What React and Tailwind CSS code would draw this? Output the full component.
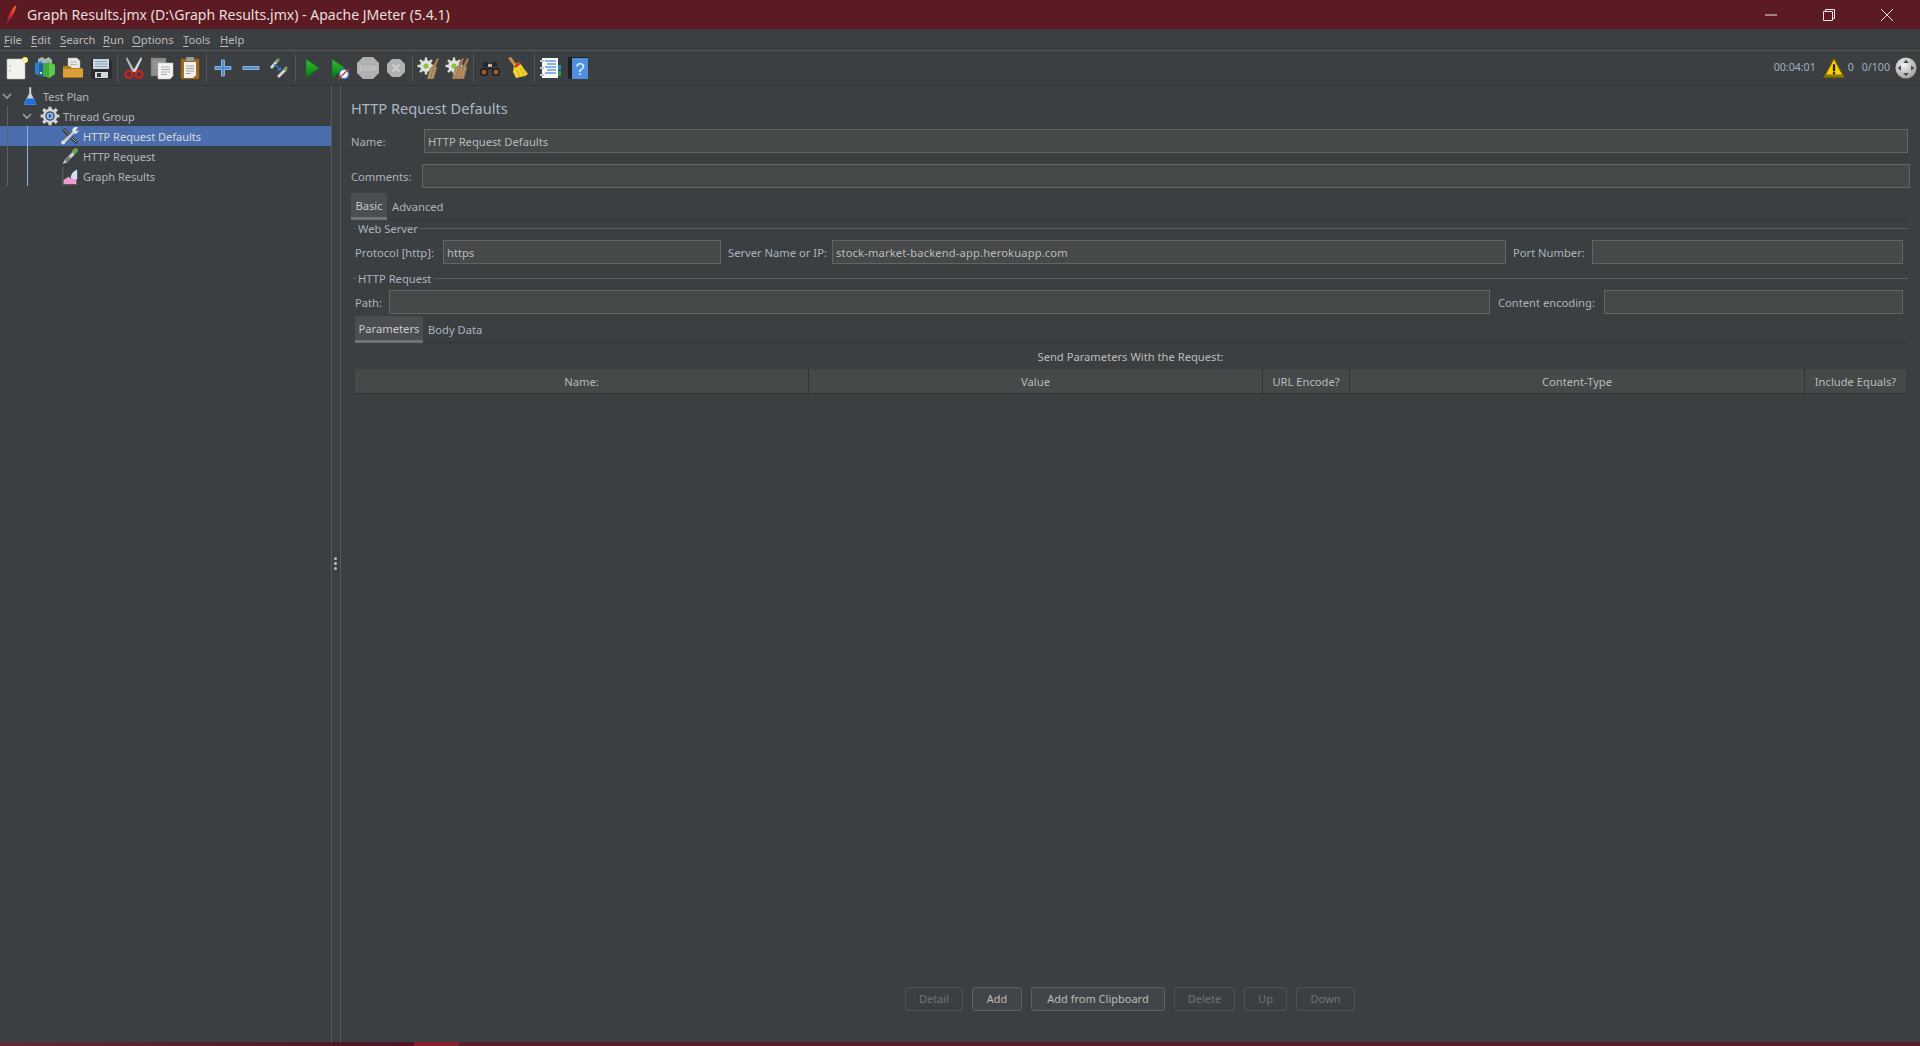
import React from 'react';

const FONT = "font-['Noto_Sans','Open_Sans',sans-serif]";

function Svg({ size = 24, children }) {
  return (
    <svg width={size} height={size} viewBox="0 0 24 24" className="shrink-0">
      {children}
    </svg>
  );
}

function NewIcon() {
  return (
    <Svg>
      <rect x="2" y="3" width="18" height="20" rx="1" fill="#f1f1ee" stroke="#bdbdbd" strokeWidth="0.6" />
      <circle cx="5" cy="10" r="0.7" fill="#999" />
      <circle cx="5" cy="15" r="0.7" fill="#999" />
      <circle cx="20" cy="4" r="3" fill="#f7e98a" />
      <circle cx="20" cy="4" r="1.5" fill="#fff6c0" />
    </Svg>
  );
}

function TemplatesIcon() {
  return (
    <Svg>
      <path d="M5 3l4-2 3 2 4-2 3 3v8H5z" fill="#a9b5b8" />
      <path d="M2 7l7-2v15l-7-2z" fill="#2f7fc9" />
      <path d="M6 8l5-1v14l-5-1z" fill="#1e5fa8" />
      <path d="M10 8l6-2 6 3v9l-6 4-6-2z" fill="#3fae38" />
      <path d="M16 6l6 3v9l-6 4z" fill="#5fc94a" />
      <rect x="7" y="16" width="2" height="2" fill="#f5e15a" />
    </Svg>
  );
}

function OpenIcon() {
  return (
    <Svg>
      <path d="M7 2h9l3 3v9H7z" fill="#e9e9e6" stroke="#a8a8a8" strokeWidth="0.5" />
      <path d="M9 6h7M9 8.5h7" stroke="#aaa" strokeWidth="0.8" />
      <path d="M2 10h7l2 2h11v9a1 1 0 01-1 1H3a1 1 0 01-1-1z" fill="#b97f1f" />
      <path d="M2 13h20v8a1 1 0 01-1 1H3a1 1 0 01-1-1z" fill="#d9a03a" />
      <path d="M2 21h20v1H2z" fill="#a86f17" />
    </Svg>
  );
}

function SaveIcon() {
  return (
    <Svg>
      <path d="M2 3h19l2 2v18H2z" fill="#2b2d30" />
      <rect x="4" y="3" width="16" height="10" fill="#c9d5e2" />
      <path d="M6 5.5h12M6 8h12M6 10.5h12" stroke="#8ba0b8" strokeWidth="0.9" />
      <rect x="6" y="16" width="13" height="6" fill="#d7d7d7" />
      <rect x="8" y="17" width="4" height="4" fill="#3a3a3a" />
    </Svg>
  );
}

function CutIcon() {
  return (
    <Svg>
      <path d="M5 1l8 14-2.5 1.5L4 3z" fill="#b5b8ba" />
      <path d="M19 1l-8 14 2.5 1.5L20 3z" fill="#d6d8d9" />
      <circle cx="7" cy="18.5" r="3.5" fill="none" stroke="#d41f1f" strokeWidth="2.2" />
      <circle cx="17" cy="18.5" r="3.5" fill="none" stroke="#d41f1f" strokeWidth="2.2" />
    </Svg>
  );
}

function CopyIcon() {
  return (
    <Svg>
      <rect x="1" y="2" width="15" height="18" fill="#8d8d8d" stroke="#707070" strokeWidth="0.5" />
      <path d="M3 6h11M3 9h11M3 12h11" stroke="#a8a8a8" strokeWidth="0.8" />
      <path d="M8 7h15v13l-3 3H8z" fill="#f3f3f1" stroke="#c4c4c4" strokeWidth="0.5" />
      <path d="M11 11h9M11 13.5h9M11 16h9M11 18.5h6" stroke="#9a9a9a" strokeWidth="0.8" />
    </Svg>
  );
}

function PasteIcon() {
  return (
    <Svg>
      <rect x="3" y="3" width="18" height="20" rx="1" fill="#a3681f" stroke="#8a5516" strokeWidth="0.6" />
      <rect x="8" y="1" width="8" height="4" rx="1" fill="#9b9b9b" />
      <path d="M6 6h12v13l-3 3H6z" fill="#efefec" />
      <path d="M8 10h8M8 12.5h8M8 15h8M8 17.5h5" stroke="#8f8f8f" strokeWidth="0.8" />
    </Svg>
  );
}

function PlusIcon() {
  return (
    <Svg>
      <path d="M10.5 4h3v6.5H20v3h-6.5V20h-3v-6.5H4v-3h6.5z" fill="#4f8fd0" stroke="#9cc4ec" strokeWidth="0.8" />
    </Svg>
  );
}

function MinusIcon() {
  return (
    <Svg>
      <rect x="4" y="10.5" width="16" height="3" fill="#4f8fd0" stroke="#9cc4ec" strokeWidth="0.8" />
    </Svg>
  );
}

function ToggleIcon() {
  return (
    <Svg>
      <path d="M3 11l7-8 2 2-7 8z" fill="#d4d6d4" />
      <path d="M8 5l3-3 2 2-3 3z" fill="#6f9a5e" />
      <path d="M10 20l8-8 2 2-8 8z" fill="#d4d6d4" />
      <path d="M16 13l3-3 2 2-3 3z" fill="#6f9a5e" />
      <path d="M7 8l6 5" stroke="#2f7fd8" strokeWidth="1.4" />
      <path d="M14 10.5v4h-4z" fill="#2f7fd8" />
    </Svg>
  );
}

function PlayIcon() {
  return (
    <Svg>
      <defs>
        <linearGradient id="play" x1="0" y1="0" x2="0" y2="1">
          <stop offset="0" stopColor="#30c030" />
          <stop offset="1" stopColor="#067a10" />
        </linearGradient>
      </defs>
      <path d="M6 3l13 9-13 10z" fill="url(#play)" stroke="#0d6b15" strokeWidth="0.5" />
    </Svg>
  );
}

function PlayNoIcon() {
  return (
    <Svg>
      <defs>
        <linearGradient id="playn" x1="0" y1="0" x2="0" y2="1">
          <stop offset="0" stopColor="#30c030" />
          <stop offset="1" stopColor="#067a10" />
        </linearGradient>
      </defs>
      <path d="M4 3l13 9-13 10z" fill="url(#playn)" stroke="#0d6b15" strokeWidth="0.5" />
      <circle cx="16" cy="18" r="4.6" fill="#f4f6fb" stroke="#3a78d8" strokeWidth="1.4" />
      <path d="M10 23l11-10" stroke="#c8372e" strokeWidth="1.3" />
    </Svg>
  );
}

function StopIcon() {
  return (
    <svg width="24" height="24" viewBox="0 0 24 24" className="shrink-0">
      <path d="M7 1h10l6 6v10l-6 6H7l-6-6V7z" fill="#b1b1b1" />
      <text x="12" y="15" textAnchor="middle" fontSize="7" fontWeight="700" fill="#c9c9c9" fontFamily="Liberation Sans">STOP</text>
    </svg>
  );
}

function ShutdownIcon() {
  return (
    <Svg>
      <path d="M8 3h8l5 5v8l-5 5H8l-5-5V8z" fill="#b1b1b1" />
      <path d="M8.5 8.5l7 7M15.5 8.5l-7 7" stroke="#cdcdcd" strokeWidth="2.4" />
    </Svg>
  );
}

function Gear({ cx, cy }) {
  return (
    <g transform={`translate(${cx} ${cy})`}>
      <circle r="6" fill="#e0e0dc" />
      <g stroke="#e0e0dc" strokeWidth="2.4">
        <path d="M0-8.5V8.5M-8.5 0H8.5M-6-6L6 6M6-6L-6 6" />
      </g>
      <circle r="2.6" fill="#8fc23c" />
    </g>
  );
}

function BrushStrokes({ x }) {
  return (
    <g transform={`translate(${x} 0)`}>
      <path d="M17 2l2 1-3 7 1 2-3 11H7l3-11 3-2z" fill="#a37c55" />
      <path d="M9 22l3-10M12 22l3-11" stroke="#c9a67d" strokeWidth="0.8" />
    </g>
  );
}

function ClearIcon() {
  return (
    <Svg>
      <Gear cx={9} cy={10} />
      <BrushStrokes x={3} />
    </Svg>
  );
}

function ClearAllIcon() {
  return (
    <Svg>
      <Gear cx={9} cy={10} />
      <BrushStrokes x={0} />
      <BrushStrokes x={5} />
    </Svg>
  );
}

function BinocularsIcon() {
  return (
    <Svg>
      <path d="M6 6h4l1 3h2l1-3h4l5 11H15v-3H9v3H1z" fill="#26262a" />
      <circle cx="6" cy="16" r="5" fill="#1c1c1f" stroke="#55555a" strokeWidth="0.8" />
      <circle cx="18" cy="16" r="5" fill="#1c1c1f" stroke="#55555a" strokeWidth="0.8" />
      <circle cx="6" cy="16" r="2.6" fill="#9c5a2a" />
      <circle cx="18" cy="16" r="2.6" fill="#9c5a2a" />
      <rect x="10" y="8" width="4" height="3" fill="#b8b8b8" />
    </Svg>
  );
}

function BroomIcon() {
  return (
    <Svg>
      <path d="M2 2l3-1 6 8-2.5 2z" fill="#c98f46" />
      <path d="M8 9l5-3 9 12-3 2-9 2-3-6z" fill="#f3d42e" />
      <path d="M8 10l5-4 1.5 2-5 4z" fill="#d92a1e" />
      <path d="M11 14l3 7M14 12l4 8M17 12l3 6" stroke="#c6a414" strokeWidth="0.8" />
    </Svg>
  );
}

function FunctionIcon() {
  return (
    <Svg>
      <rect x="3" y="2" width="16" height="20" fill="#f8f8f6" />
      <path d="M6 5h11M8 8h9M6 11h11M8 14h9M6 17h11" stroke="#1f6fd0" strokeWidth="1.2" />
      <path d="M1 5h4M1 12h4M1 19h4" stroke="#c9c9c9" strokeWidth="1.8" />
      <rect x="19" y="9" width="3" height="5" fill="#2f7fd8" />
      <rect x="19" y="15" width="3" height="5" fill="#27a04a" />
    </Svg>
  );
}

function HelpIcon() {
  return (
    <svg width="24" height="24" viewBox="0 0 24 24" className="shrink-0">
      <rect x="1" y="1" width="20" height="22" rx="1" fill="#1c1f24" />
      <rect x="5" y="2" width="16" height="21" fill="#4f8fe0" />
      <text x="13" y="19" textAnchor="middle" fontSize="17" fill="#e6eefb" fontFamily="Liberation Sans">?</text>
    </svg>
  );
}

function WarningIcon() {
  return (
    <Svg size={22}>
      <path d="M12 1.5L23 22H1z" fill="#f7cf06" stroke="#6b5a0a" strokeWidth="1.2" />
      <path d="M1 22h22l-2-3H3z" fill="#8a7406" />
      <rect x="10.8" y="8" width="2.4" height="7.5" fill="#221c02" />
      <rect x="10.8" y="16.5" width="2.4" height="2.4" fill="#221c02" />
    </Svg>
  );
}

function LogIcon() {
  return (
    <Svg size={22}>
      <defs>
        <radialGradient id="lg" cx="0.4" cy="0.35" r="0.7">
          <stop offset="0" stopColor="#f4f4f4" />
          <stop offset="1" stopColor="#9c9c9c" />
        </radialGradient>
      </defs>
      <circle cx="12" cy="12" r="11.5" fill="url(#lg)" />
      <g fill="#4a4a4a">
        <path d="M12 3l3 3.5H9z" />
        <path d="M12 21l3-3.5H9z" />
        <path d="M3 12l3.5-3v6z" />
        <path d="M21 12l-3.5-3v6z" />
      </g>
    </Svg>
  );
}

function FlaskIcon() {
  return (
    <Svg>
      <path d="M11 1h2.5v8l6 12a1.5 1.5 0 01-1.4 2H6a1.5 1.5 0 01-1.4-2l6.4-12z" fill="#cdd3da" />
      <path d="M8 15h8.5l3 6a1.5 1.5 0 01-1.4 2H6a1.5 1.5 0 01-1.4-2z" fill="#1f6fe0" />
    </Svg>
  );
}

function GearIcon() {
  return (
    <Svg>
      <g stroke="#d5d5d5" strokeWidth="4">
        <path d="M12 0v24M0 12h24M3.5 3.5l17 17M20.5 3.5l-17 17" />
      </g>
      <circle cx="12" cy="12" r="9" fill="#d5d5d5" />
      <circle cx="12" cy="12" r="6" fill="#3f5f8a" />
      <circle cx="12" cy="12" r="4" fill="#9cc0e8" />
      <path d="M10.5 9l4 3-4 3z" fill="#2f5a98" />
    </Svg>
  );
}

function WrenchIcon() {
  return (
    <Svg>
      <path d="M3 4l2-2 15 16 2 4-4-1.5L3 6z" fill="#2b2b2b" />
      <path d="M4 3.5l15.5 16" stroke="#e6e6e6" strokeWidth="1" />
      <path d="M22 1l-3 4 1.5 1.5L23 4a5 5 0 01-6 5L6 20a2.5 2.5 0 11-2.5-2.5L15 7a5 5 0 017-6z" fill="#e3e3e0" />
      <path d="M4 19l12-11" stroke="#8b8b8b" strokeWidth="0.8" />
    </Svg>
  );
}

function PipetteIcon() {
  return (
    <Svg>
      <path d="M3 22l2-5L15 7l3 3L8 20z" fill="#c9cbc9" />
      <path d="M5 17l5-5 3 3-5 5z" fill="#77797a" />
      <path d="M14 6l3-3a2.5 2.5 0 014 4l-3 3z" fill="#6aa84f" />
      <path d="M2 24h12" stroke="#2a2a2a" strokeWidth="1" />
    </Svg>
  );
}

function GraphIcon() {
  return (
    <Svg>
      <path d="M3 1v22h19" stroke="#6f6f6f" strokeWidth="1" fill="none" />
      <path d="M4 22v-5l6-4 5 3 5-2v8z" fill="#f09ad2" />
      <path d="M13 14c0-6 6-9 8-10v12h-5c-2 0-3-1-3-2z" fill="#cfe2f6" />
    </Svg>
  );
}

function Feather() {
  return (
    <svg width="12" height="20" viewBox="0 0 12 20" className="shrink-0">
      <defs>
        <linearGradient id="fe" x1="0" y1="1" x2="1" y2="0">
          <stop offset="0" stopColor="#7a1f6a" />
          <stop offset="0.5" stopColor="#e0252e" />
          <stop offset="1" stopColor="#f08a2e" />
        </linearGradient>
      </defs>
      <path d="M10.5 0C6 3 3 8 1.5 14L1 19l1.5-3C6 13 9 7 10.5 0z" fill="url(#fe)" />
    </svg>
  );
}

function Sep() {
  return <div className="w-px h-[26px] bg-[#555759] mx-[2px] shrink-0" />;
}

function Tool({ children }) {
  return <div className="w-[28px] h-[28px] flex items-center justify-center shrink-0">{children}</div>;
}

function Menu({ className, first, rest }) {
  return (
    <span className={`shrink-0 ${className}`}>
      <span className="underline underline-offset-2">{first}</span>
      {rest}
    </span>
  );
}

function TreeRow({ className, chevron, icon, label, selected }) {
  return (
    <div className={`h-[20px] flex items-center ${className} ${selected ? 'bg-[#4b6eaf] text-[#d8d8d8]' : 'text-[#aeb6bd]'}`}>
      <div className="w-[12px] shrink-0 flex items-center">
        {chevron && (
          <svg width="10" height="7" viewBox="0 0 10 7">
            <path d="M1 1l4 4 4-4" fill="none" stroke="#9a9c9e" strokeWidth="1.6" />
          </svg>
        )}
      </div>
      <div className="w-[20px] h-[20px] flex items-center justify-center shrink-0 ml-[6px] mr-[3px]">
        <div className="scale-[0.8] flex">{icon}</div>
      </div>
      <span className="relative top-px text-[11px]">{label}</span>
    </div>
  );
}

function Input({ className, value }) {
  return (
    <div className={`h-[24px] bg-[#45494a] border border-[#646464] px-[3px] pt-[2px] flex items-center text-[#bbbbbb] shrink-0 ${className}`}>
      {value}
    </div>
  );
}

function Label({ className, children }) {
  return <div className={`shrink-0 text-[#a9b4bf] whitespace-nowrap pt-[2px] ${className}`}>{children}</div>;
}

function Legend({ children }) {
  return (
    <div className="h-[16px] flex items-center ml-[12px] mr-[12px]">
      <div className="w-[3px] h-px bg-[#5a5c5e]" />
      <span className="px-[2px] text-[#a9b4bf] relative top-px">{children}</span>
      <div className="flex-1 h-px bg-[#5a5c5e]" />
    </div>
  );
}

function Tabs({ active, other, activeClass, className }) {
  return (
    <div className={`h-[27px] flex border-b border-[#323436] ${className}`}>
      <div className={`h-[27px] bg-[#4a4e51] border-b-[3px] border-[#6e7276] pt-[2px] flex items-center justify-center text-[#c8c8c8] ${activeClass}`}>
        {active}
      </div>
      <div className="h-[26px] flex items-center pl-[5px] pt-[2px] text-[#a9b4bf]">{other}</div>
    </div>
  );
}

function Btn({ className, children, off }) {
  return (
    <div className={`h-[24px] rounded-[3px] border flex items-center justify-center text-[11px] ${className} ${off ? 'border-[#4e5254] text-[#6f7375]' : 'border-[#5e6162] bg-[#414547] text-[#bbbbbb]'}`}>
      {children}
    </div>
  );
}

const columns = [
  { name: 'Name:', cls: 'w-[454px] border-r border-[#323436]' },
  { name: 'Value', cls: 'w-[454px] border-r border-[#323436]' },
  { name: 'URL Encode?', cls: 'w-[87px] border-r border-[#323436]' },
  { name: 'Content-Type', cls: 'w-[455px] border-r border-[#323436]' },
  { name: 'Include Equals?', cls: 'w-[101px]' },
];

export default function App() {
  return (
    <div className={`${FONT} w-[1920px] h-[1046px] overflow-hidden bg-[#3c3f41] text-[#bbbbbb] text-[11.2px] flex flex-col`}>
      {/* title bar */}
      <div className="h-[29px] bg-[#5c1b22] flex items-center shrink-0 pl-[6px] pr-[4px] text-[#e8dede]">
        <Feather />
        <span className="ml-[9px] text-[14.05px]">Graph Results.jmx (D:\Graph Results.jmx) - Apache JMeter (5.4.1)</span>
        <div className="flex-1" />
        <div className="w-[58px] flex justify-center">
          <svg width="12" height="12" viewBox="0 0 12 12"><path d="M0 6h12" stroke="#f0e8e8" strokeWidth="1" /></svg>
        </div>
        <div className="w-[58px] flex justify-center">
          <svg width="12" height="12" viewBox="0 0 12 12" fill="none" stroke="#f0e8e8" strokeWidth="1">
            <path d="M0.5 2.5h9v9h-9z" />
            <path d="M2.5 2.5v-2h9v9h-2" />
          </svg>
        </div>
        <div className="w-[58px] flex justify-center">
          <svg width="12" height="12" viewBox="0 0 12 12"><path d="M0 0l12 12M12 0L0 12" stroke="#f0e8e8" strokeWidth="1" /></svg>
        </div>
      </div>

      {/* menu bar */}
      <div className="h-[22px] flex items-center shrink-0 pl-[4px] pt-px border-b border-[#555759]">
        <Menu className="w-[27px]" first="F" rest="ile" />
        <Menu className="w-[29px]" first="E" rest="dit" />
        <Menu className="w-[43px]" first="S" rest="earch" />
        <Menu className="w-[29px]" first="R" rest="un" />
        <Menu className="w-[51px]" first="O" rest="ptions" />
        <Menu className="w-[37px]" first="T" rest="ools" />
        <Menu className="w-[30px]" first="H" rest="elp" />
      </div>

      {/* toolbar */}
      <div className="h-[35px] flex items-center shrink-0 pl-[3px] pr-[3px] border-b border-[#323436]">
        <Tool><NewIcon /></Tool>
        <Tool><TemplatesIcon /></Tool>
        <Tool><OpenIcon /></Tool>
        <Tool><SaveIcon /></Tool>
        <Sep />
        <Tool><CutIcon /></Tool>
        <Tool><CopyIcon /></Tool>
        <Tool><PasteIcon /></Tool>
        <Sep />
        <Tool><PlusIcon /></Tool>
        <Tool><MinusIcon /></Tool>
        <Tool><ToggleIcon /></Tool>
        <Sep />
        <Tool><PlayIcon /></Tool>
        <Tool><PlayNoIcon /></Tool>
        <Tool><StopIcon /></Tool>
        <Tool><ShutdownIcon /></Tool>
        <Sep />
        <Tool><ClearIcon /></Tool>
        <Tool><ClearAllIcon /></Tool>
        <Sep />
        <Tool><BinocularsIcon /></Tool>
        <Tool><BroomIcon /></Tool>
        <Sep />
        <Tool><FunctionIcon /></Tool>
        <Tool><HelpIcon /></Tool>
        <div className="flex-1" />
        <span className="text-[10.6px] text-[#9fb0c0]">00:04:01</span>
        <div className="ml-[7px]"><WarningIcon /></div>
        <span className="ml-[3px] text-[10.6px] text-[#9fb0c0]">0</span>
        <span className="ml-[8px] text-[10.6px] text-[#9fb0c0]">0/100</span>
        <div className="ml-[5px]"><LogIcon /></div>
      </div>

      <div className="flex-1 flex min-h-0">
        {/* tree */}
        <div className="w-[331px] shrink-0 relative">
          <TreeRow className="pl-[2px]" chevron icon={<FlaskIcon />} label="Test Plan" />
          <TreeRow className="pl-[22px]" chevron icon={<GearIcon />} label="Thread Group" />
          <TreeRow className="pl-[42px]" icon={<WrenchIcon />} label="HTTP Request Defaults" selected />
          <TreeRow className="pl-[42px]" icon={<PipetteIcon />} label="HTTP Request" />
          <TreeRow className="pl-[42px]" icon={<GraphIcon />} label="Graph Results" />
          <div className="absolute left-[7px] top-[20px] h-[80px] w-px bg-[#5f6265]" />
          <div className="absolute left-[27px] top-[40px] h-[60px] w-px bg-[#8ab4e0]" />
        </div>

        {/* splitter */}
        <div className="w-[10px] shrink-0 border-x border-[#555759] flex flex-col items-center justify-center gap-[2px] pr-[2px] pb-[2px]">
          <div className="w-[3px] h-[3px] rounded-full bg-[#bbbbbb]" />
          <div className="w-[3px] h-[3px] rounded-full bg-[#bbbbbb]" />
          <div className="w-[3px] h-[3px] rounded-full bg-[#bbbbbb]" />
        </div>

        {/* main panel */}
        <div className="flex-1 min-w-0 flex flex-col pb-[31px]">
          <div className="h-[24px] mt-[10px] ml-[10px] pt-px flex items-center text-[14.6px] text-[#a9b7c6]">HTTP Request Defaults</div>

          <div className="flex items-center mt-[9px] ml-[10px] mr-[12px]">
            <Label className="w-[73px]">Name:</Label>
            <Input className="flex-1" value="HTTP Request Defaults" />
          </div>
          <div className="flex items-center mt-[11px] ml-[10px] mr-[10px]">
            <Label className="w-[71px]">Comments:</Label>
            <Input className="flex-1" />
          </div>

          <Tabs className="mt-[5px] ml-[10px] mr-[12px]" active="Basic" other="Advanced" activeClass="w-[36px]" />

          <Legend>Web Server</Legend>
          <div className="flex items-center mt-[4px] ml-[14px]">
            <Label className="w-[88px]">Protocol [http]:</Label>
            <Input className="w-[278px]" value="https" />
            <div className="w-[7px]" />
            <Label className="w-[104px]">Server Name or IP:</Label>
            <Input className="w-[674px]" value={<span className="tracking-[0.14px]">stock-market-backend-app.herokuapp.com</span>} />
            <div className="w-[7px]" />
            <Label className="w-[79px]">Port Number:</Label>
            <Input className="w-[311px]" />
          </div>

          <div className="mt-[6px]"><Legend>HTTP Request</Legend></div>
          <div className="flex items-center mt-[4px] ml-[14px]">
            <Label className="w-[34px]">Path:</Label>
            <Input className="w-[1101px]" />
            <div className="w-[8px]" />
            <Label className="w-[106px]">Content encoding:</Label>
            <Input className="w-[299px]" />
          </div>

          <Tabs className="mt-[2px] ml-[14px] mr-[14px]" active="Parameters" other="Body Data" activeClass="w-[68px]" />

          <div className="h-[18px] mt-[4px] ml-[14px] pt-[2px] w-[1551px] flex items-center justify-center">Send Parameters With the Request:</div>

          <div className="mt-[4px] ml-[14px] w-[1551px] h-[25px] flex bg-[#45494a] border-b border-[#323436]">
            {columns.map(c => (
              <div key={c.name} className={`flex items-center justify-center shrink-0 pt-[2px] ${c.cls}`}>
                {c.name}
              </div>
            ))}
          </div>

          <div className="flex-1" />

          <div className="flex justify-center gap-[9px] ml-[14px] w-[1550px]">
            <Btn className="w-[58px]" off>Detail</Btn>
            <Btn className="w-[50px]">Add</Btn>
            <Btn className="w-[134px]">Add from Clipboard</Btn>
            <Btn className="w-[61px]" off>Delete</Btn>
            <Btn className="w-[43px]" off>Up</Btn>
            <Btn className="w-[59px]" off>Down</Btn>
          </div>
        </div>
      </div>

      {/* strip of the taskbar at the bottom */}
      <div className="h-[4px] shrink-0 flex">
        <div className="w-[414px] bg-gradient-to-r from-[#5e2c33] to-[#4a1722]" />
        <div className="w-[45px] bg-[#8a1f2d]" />
        <div className="flex-1 bg-[#552028]" />
      </div>
    </div>
  );
}
